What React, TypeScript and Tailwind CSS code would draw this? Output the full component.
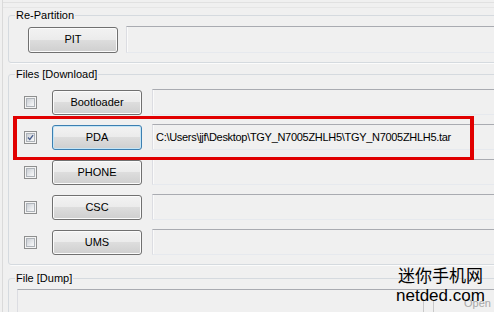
import React from 'react';

const rows = [
  { id: 'bl', label: 'Bootloader', checked: false, path: '', focus: false },
  { id: 'pda', label: 'PDA', checked: true, path: 'C:\\Users\\jjf\\Desktop\\TGY_N7005ZHLH5\\TGY_N7005ZHLH5.tar', focus: true },
  { id: 'phone', label: 'PHONE', checked: false, path: '', focus: false },
  { id: 'csc', label: 'CSC', checked: false, path: '', focus: false },
  { id: 'ums', label: 'UMS', checked: false, path: '', focus: false },
];

function WinButton({ label, focus, tall }: { label: string; focus?: boolean; tall?: boolean }) {
  return (
    <div
      className={`w-[90px] ${tall ? 'h-[26px]' : 'h-[25px]'} shrink-0 rounded-[3px] border flex items-center justify-center text-[11px] text-black bg-[linear-gradient(to_bottom,#f2f2f2_0%,#ebebeb_50%,#dddddd_50%,#cfcfcf_100%)] ${
        focus
          ? 'border-[#3c7fb1] shadow-[inset_0_0_0_1px_#c4e5f6]'
          : 'border-[#707070] shadow-[inset_0_0_0_1px_#fbfbfb]'
      }`}
    >
      {label}
    </div>
  );
}

function Field({ text, tall }: { text?: string; tall?: boolean }) {
  return (
    <div
      className={`flex-1 ${tall ? 'h-[27px]' : 'h-[26px]'} border border-t-[#a9abb1] border-l-[#dcdde2] border-r-[#dcdde2] border-b-[#e6e9ee] bg-[#f0f0f0] shadow-[inset_1px_0_0_#fafafa] flex items-center pl-[3px] text-[11px] text-black tracking-[-0.3px] whitespace-nowrap overflow-hidden`}
    >
      {text}
    </div>
  );
}

function CheckBox({ checked }: { checked: boolean }) {
  return (
    <div className="w-[13px] h-[13px] shrink-0 border border-[#8e8f8f] bg-[#f4f4f4] p-[1px]">
      <div className="w-full h-full border border-[#aeb3b9] bg-[linear-gradient(135deg,#cbcfd5_0%,#eceef0_70%,#f7f7f7_100%)] relative">
        {checked && (
          <svg viewBox="0 0 9 9" className="absolute inset-0 w-full h-full">
            <path d="M1.2 4.4 L3.6 6.9 L7.8 1.4" fill="none" stroke="#4a5f8d" strokeWidth="1.7" />
          </svg>
        )}
      </div>
    </div>
  );
}

function Group({ title, className, children }: { title: string; className: string; children?: React.ReactNode }) {
  return (
    <div className={`relative w-[520px] rounded-[3px] border border-[#d5dadf] shadow-[1px_1px_0_#fbfbfb] ${className}`}>
      <span className="absolute left-[6px] -top-[7px] px-[1px] bg-[#f0f0f0] leading-[13px] text-[11px] text-black">
        {title}
      </span>
      {children}
    </div>
  );
}

export default function App() {
  return (
    <div
      className="relative w-[494px] h-[312px] overflow-hidden bg-[#f0f0f0]"
      style={{ fontFamily: '"Liberation Sans", Arial, sans-serif' }}
    >
      <div className="ml-[2px] h-full border-l border-[#dadada]">
        <div className="h-[3px] border-b border-[#e1e1e1]" />
        <div className="h-[5px] border-b border-[#e6e6e6]" />

        <div className="ml-[5px] pt-[7px]">
          <Group title="Re-Partition" className="pt-[10px] pb-[9px] pl-[19px]">
            <div className="flex items-center gap-[8px]">
              <WinButton label="PIT" tall />
              <Field tall />
            </div>
          </Group>

          <Group title="Files [Download]" className="mt-[11px] pt-[14px] pb-[9px] pl-[15px]">
            <div className="flex flex-col gap-[9px]">
              {rows.map((r) => (
                <div key={r.id} className="flex items-center h-[26px]">
                  <CheckBox checked={r.checked} />
                  <div className="ml-[15px]">
                    <WinButton label={r.label} focus={r.focus} />
                  </div>
                  <div className="ml-[10px] flex-1 flex">
                    <Field text={r.path} />
                  </div>
                </div>
              ))}
            </div>
          </Group>

          <Group title="File [Dump]" className="mt-[13px] pt-[10px] pl-[8px] h-[60px]">
            <div className="h-[40px] border border-t-[#a9abb1] border-l-[#dcdde2] border-r-[#dcdde2] border-b-[#e6e9ee] bg-[#f0f0f0]" />
          </Group>
        </div>
      </div>

      {/* partly hidden Open button behind the watermark */}
      <div className="absolute left-[423px] top-[300px] w-px h-[12px] bg-[#c8c8c8]" />
      <div className="absolute left-[433px] top-[300px] w-px h-[12px] bg-[#c8c8c8]" />
      <div className="absolute left-[464px] top-[297px] text-[11px] text-[#a8a8a8] leading-[13px]">Open</div>

      {/* highlight box */}
      <div className="absolute left-[13px] top-[116px] w-[461px] h-[44px] border-[3px] border-l-[4px] border-r-[4px] border-[#e10000]" />

      {/* watermark */}
      <div className="absolute left-[396px] top-[265px] flex flex-col items-center text-black">
        <span
          className="text-[17px] leading-[20px]"
          style={{ fontFamily: '"Noto Sans CJK SC", "Noto Sans", sans-serif' }}
        >
          迷你手机网
        </span>
        <span className="text-[17px] leading-[20px] mt-[1px]">netded.com</span>
      </div>
    </div>
  );
}
